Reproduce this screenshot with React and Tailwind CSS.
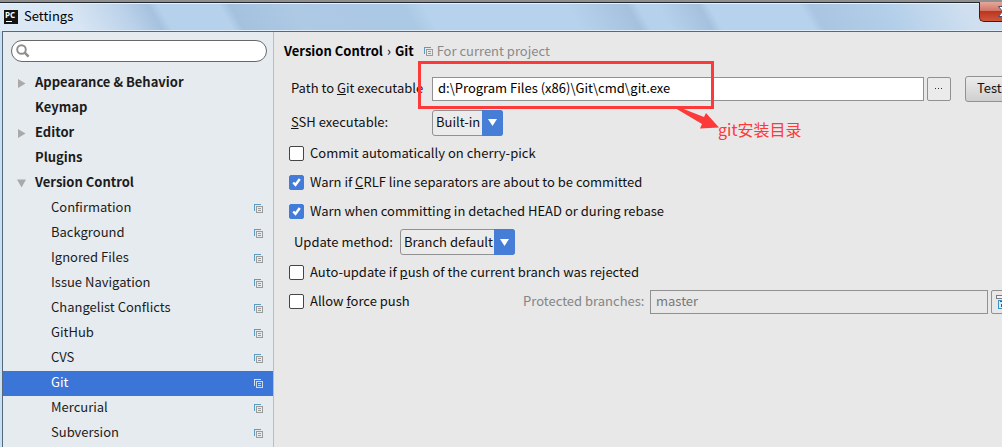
import React from "react";

const NAV = [
  { label: "Appearance & Behavior", arrow: "right" },
  { label: "Keymap" },
  { label: "Editor", arrow: "right" },
  { label: "Plugins" },
  { label: "Version Control", arrow: "down" },
  { label: "Confirmation", child: true },
  { label: "Background", child: true },
  { label: "Ignored Files", child: true },
  { label: "Issue Navigation", child: true },
  { label: "Changelist Conflicts", child: true },
  { label: "GitHub", child: true },
  { label: "CVS", child: true },
  { label: "Git", child: true, selected: true },
  { label: "Mercurial", child: true },
  { label: "Subversion", child: true },
];

function ProjectIcon({ selected, className = "" }) {
  const back = selected ? "#d5e0f3" : "#5a9cc4";
  const front = selected ? "#d8d8d8" : "#9b9b9b";
  return (
    <svg width="9" height="9" viewBox="0 0 9 9" shapeRendering="crispEdges" className={`shrink-0 ${className}`} aria-hidden="true">
      <path d="M0 0H7V1H1V7H0Z" fill={back} />
      <path d="M2 2H9V9H2ZM3 3V8H8V3Z" fill={front} fillRule="evenodd" />
      <path d="M4 4H7V5H4ZM4 6H7V7H4Z" fill={front} />
    </svg>
  );
}

function TreeArrow({ dir }) {
  return (
    <svg width="9" height="9" viewBox="0 0 9 9" aria-hidden="true">
      <path d={dir === "down" ? "M0 0.5H9L4.5 8.5Z" : "M1 0L8.5 4.5L1 9Z"} fill="#a9a9a9" />
    </svg>
  );
}

function NavItem({ item }) {
  return (
    <li>
      <a
        href="#"
        className={`flex h-[25px] items-center pr-[10px] ${
          item.selected ? "bg-[#3a75d7] text-white" : "text-[#1c1c1c]"
        } ${item.child ? "pl-12" : "pl-[14px] font-bold"}`}
      >
        {!item.child && (
          <span className="flex w-[18px] shrink-0">{item.arrow && <TreeArrow dir={item.arrow} />}</span>
        )}
        <span className="flex-1 whitespace-nowrap pb-[3px]">{item.label}</span>
        {item.child && <ProjectIcon selected={item.selected} />}
      </a>
    </li>
  );
}

function Check({ id, checked, children }) {
  return (
    <div className="flex h-[29px] items-center">
      <span className="relative flex">
        <input
          id={id}
          type="checkbox"
          defaultChecked={checked}
          className="peer size-[15px] appearance-none rounded-[2px] border border-[#454545] bg-white checked:border-[#3f7fdc] checked:bg-[#437bd8]"
        />
        <svg
          viewBox="0 0 15 15"
          className="pointer-events-none absolute inset-0 hidden size-[15px] peer-checked:block"
          aria-hidden="true"
        >
          <path d="M4.2 7.5L6.5 9.8L10.8 4" fill="none" stroke="#fff" strokeWidth="2.4" />
        </svg>
      </span>
      <label htmlFor={id} className="whitespace-nowrap pb-px pl-[6px]">
        {children}
      </label>
    </div>
  );
}

function Dropdown({ id, value, className }) {
  return (
    <span className={`relative flex h-[26px] ${className}`}>
      <select
        id={id}
        defaultValue={value}
        className="h-full w-full appearance-none rounded-[3px] border border-[#919191] bg-[#ebebeb] pb-px pl-[3px]"
      >
        <option>{value}</option>
      </select>
      <span className="pointer-events-none absolute inset-y-0 right-0 flex w-[21px] items-center justify-center rounded-r-[3px] bg-[#467dd7]">
        <svg width="9" height="7" viewBox="0 0 9 7" aria-hidden="true">
          <path d="M0 0H9L4.5 7Z" fill="#fff" />
        </svg>
      </span>
    </span>
  );
}

function TitleBar() {
  return (
    <header className="relative flex h-[31px] items-center overflow-hidden border-t-2 border-[#8f8f8f] bg-[linear-gradient(60deg,#dce9f5_0%,#d8e6f4_8%,#bdd3ea_13%,#a6c2df_16%,#b5d1ec_17%,#b5d1ec_23%,#a4c1de_24%,#adc9e4_30%,#abc8e4_41%,#b6d2ed_43%,#b6d2ed_57%,#a5c1dd_63%,#b5d1ec_64%,#b5d1ec_66%,#a5c1dd_70%,#b6d2ed_71%,#b6d2ed_80%,#a9c5e1_81%,#b2cee9_88%,#cfdff0_96%)] pl-1">
      <div className="absolute inset-x-0 top-0 h-px bg-[#22282e]" />
      <div className="absolute inset-x-0 top-px h-px bg-[#e4f0fa]" />
      <div className="absolute inset-x-0 bottom-0 h-px bg-[#e0ecf7]" />
      <svg width="14" height="14" viewBox="0 0 14 14" className="relative shrink-0" role="img" aria-label="PyCharm">
        <rect width="14" height="14" fill="#141414" />
        <text x="1" y="8" fill="#fff" fontSize="8" fontWeight="700" fontFamily="Open Sans, sans-serif">PC</text>
        <rect x="2" y="11" width="6" height="1" fill="#fff" />
      </svg>
      <h1 className="relative pb-px pl-[6px] text-black">Settings</h1>
      <button
        type="button"
        aria-label="Close"
        className="absolute right-0 top-0 h-5 w-[23px] overflow-hidden rounded-bl-[5px] border-b border-l border-[#3b1c1c] bg-[linear-gradient(#e3a89b_0%,#d27766_45%,#bb3620_50%,#d0563c_100%)]"
      >
        <svg width="14" height="12" viewBox="0 0 14 12" className="absolute left-[18px] top-[4px]" aria-hidden="true">
          <path d="M0.5 0.5H5L7 3L9 0.5H13.5L9.5 5.5L13.5 10.5H9L7 8L5 10.5H0.5L4.5 5.5Z" fill="#fff" stroke="#4c5068" />
        </svg>
      </button>
    </header>
  );
}

export default function App() {
  return (
    <div className="relative flex min-h-screen flex-col overflow-hidden bg-[#c9dff3] font-['Noto_Sans_CJK_SC',sans-serif] text-[13px] leading-5 text-[#111]">
      <TitleBar />
      <div className="ml-[2px] flex flex-1 border-l border-t border-[#56697c]">
        <aside className="w-[271px] shrink-0 border-r border-[#b9bcc0] bg-[#e6ebef]">
          <div className="mb-[9px] ml-2 mr-[6px] mt-2 flex h-[22px] items-center gap-1 rounded-full border border-[#686868] bg-white pl-1">
            <svg width="14" height="14" viewBox="0 0 14 14" className="shrink-0" aria-hidden="true">
              <circle cx="5.5" cy="5.5" r="4.3" fill="none" stroke="#8c8c8c" strokeWidth="1.9" />
              <path d="M8.7 8.7L12.6 12.6" stroke="#8c8c8c" strokeWidth="2.4" />
            </svg>
            <input type="search" aria-label="Search settings" className="min-w-0 flex-1 bg-transparent outline-none" />
          </div>
          <nav aria-label="Settings">
            <ul>
              {NAV.map((item) => (
                <NavItem key={item.label} item={item} />
              ))}
            </ul>
          </nav>
        </aside>

        <main className="min-w-0 flex-1 bg-[#e8e8e8] pl-[15px]">
          <div className="-ml-[5px] flex h-[39px] items-center">
            <h2 className="flex gap-1 whitespace-nowrap pb-px font-bold text-black">
              <span>Version Control</span>
              <span className="font-normal">›</span>
              <span>Git</span>
            </h2>
            <ProjectIcon className="ml-[10px] mr-1" />
            <span className="pb-px text-[#8a8a8a]">For current project</span>
          </div>

          <div className="-mr-6 flex h-[35px] items-center">
            <label htmlFor="git-path" className="w-[143px] shrink-0 whitespace-nowrap pb-px pl-[2px]">
              Path to <u>G</u>it executable
            </label>
            <input
              id="git-path"
              type="text"
              defaultValue="d:\Program Files (x86)\Git\cmd\git.exe"
              className="h-6 min-w-0 flex-1 border border-[#919191] bg-white px-[5px] pb-[2px] text-black"
            />
            <button
              type="button"
              aria-label="Browse"
              className="ml-[3px] flex h-6 w-6 shrink-0 items-center justify-center rounded-[2px] border border-[#919191] bg-[#ebebeb]"
            >
              <svg width="8" height="1" viewBox="0 0 8 1" shapeRendering="crispEdges" aria-hidden="true">
                <path d="M0 0H1V1H0ZM3 0H4V1H3ZM6 0H7V1H6Z" fill="#333" />
              </svg>
            </button>
            <button
              type="button"
              className="ml-[14px] h-[26px] w-[61px] shrink-0 rounded-[3px] border border-[#919191] bg-linear-to-b from-[#ececec] to-[#cfcfcf] pb-[2px] pl-[11px] text-left"
            >
              Test
            </button>
          </div>

          <div className="flex h-[33px] items-center">
            <label htmlFor="ssh" className="w-[143px] shrink-0 pb-px pl-[2px]">
              <u>S</u>SH executable:
            </label>
            <Dropdown id="ssh" value="Built-in" className="w-[71px]" />
          </div>

          <Check id="cherry">Commit automatically on cherry-pick</Check>
          <Check id="crlf" checked>
            Warn if <u>C</u>RLF line separators are about to be committed
          </Check>
          <Check id="detached" checked>
            Warn when committing in detached HEAD or during rebase
          </Check>

          <div className="flex h-8 items-center">
            <label htmlFor="update" className="w-[111px] shrink-0 pb-px pl-[5px]">
              Update method:
            </label>
            <Dropdown id="update" value="Branch default" className="w-[115px]" />
          </div>

          <Check id="auto-update">
            Auto-update if <u>p</u>ush of the current branch was rejected
          </Check>
          <div className="-mr-[13px] flex items-center">
            <div className="w-[234px] shrink-0">
              <Check id="force">
                Allow <u>f</u>orce push
              </Check>
            </div>
            <label htmlFor="protected" className="w-[127px] shrink-0 pb-px text-[#858585]">
              Protected branches:
            </label>
            <input
              id="protected"
              type="text"
              disabled
              defaultValue="master"
              className="h-6 min-w-0 flex-1 border border-[#919191] px-[5px] pb-[2px] text-[#777]"
            />
            <button
              type="button"
              aria-label="Edit protected branches"
              className="ml-[3px] flex h-6 w-6 shrink-0 items-center rounded-[2px] border border-[#919191] pl-1"
            >
              <svg width="14" height="14" viewBox="0 0 14 14" shapeRendering="crispEdges" className="shrink-0" aria-hidden="true">
                <path d="M0.5 0.5H13.5V3.5H0.5Z" fill="#f4f4f4" stroke="#7c7c7c" />
                <path d="M2.5 5.5H13.5V13.5H2.5Z" fill="#d6eaf7" stroke="#3c93cb" />
                <path d="M4 6H8V7H4ZM5 9H9V12H5Z" fill="#555" />
              </svg>
            </button>
          </div>
        </main>
      </div>

      <div className="pointer-events-none absolute left-[418px] top-[61px] h-12 w-[296px] border-3 border-[#fc3a3a]" />
      <svg width="44" height="22" viewBox="0 0 44 22" className="pointer-events-none absolute left-[675px] top-[108px]" aria-hidden="true">
        <path d="M0 0H6L29 9L31 5L44 19.5L25 20.5L27 16Z" fill="#fc3a3a" />
      </svg>
      <p className="pointer-events-none absolute left-[718px] top-[118px] whitespace-nowrap text-base leading-[22px] text-[#fc3a3a]">
        git安装目录
      </p>
    </div>
  );
}
